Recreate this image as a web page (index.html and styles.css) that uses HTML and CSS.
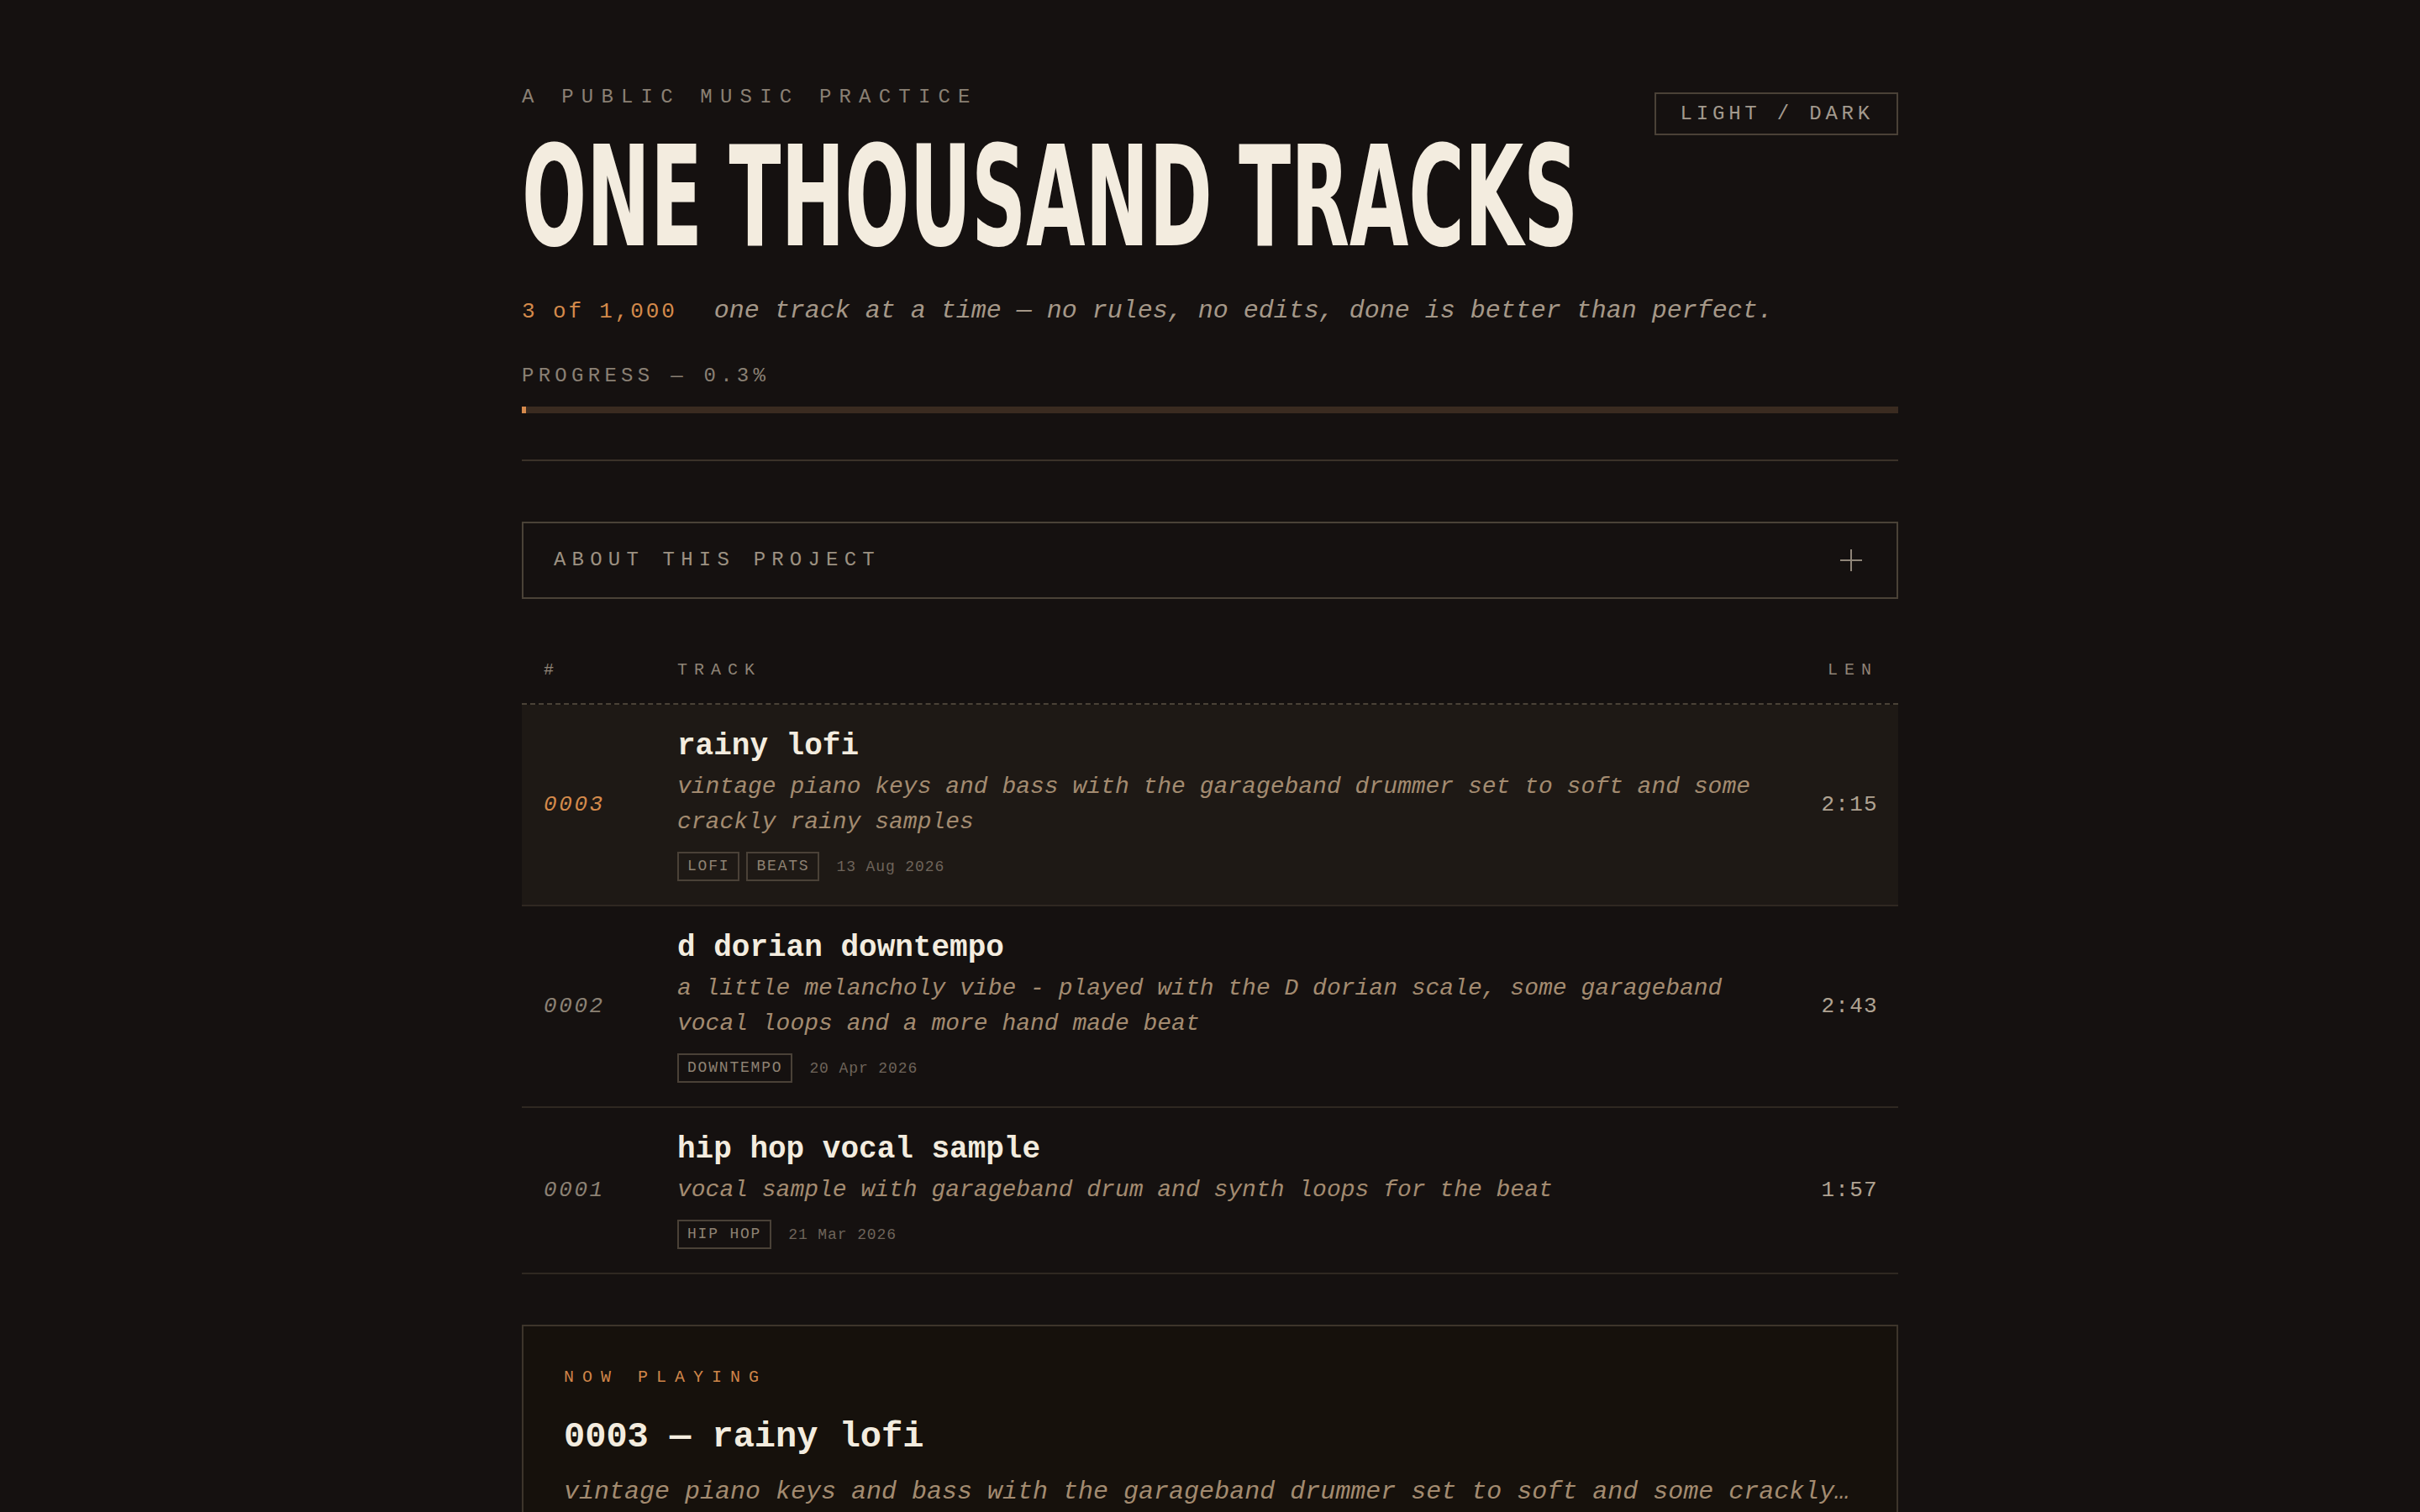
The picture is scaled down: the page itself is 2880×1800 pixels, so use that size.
FILE: index.html
```html
<!DOCTYPE html>
<html lang="en">
<head>
<meta charset="utf-8">
<title>One Thousand Tracks</title>
<link rel="stylesheet" href="styles.css">
</head>
<body>
<main class="page">
  <header class="masthead">
    <div class="masthead-main">
      <p class="eyebrow">A PUBLIC MUSIC PRACTICE</p>
      <h1 class="title"><span class="title-text">ONE THOUSAND TRACKS</span></h1>
    </div>
    <button class="theme-toggle" type="button">LIGHT / DARK</button>
  </header>

  <p class="tagline"><span class="count">3 of 1,000</span><span class="motto">one track at a time — no rules, no edits, done is better than perfect.</span></p>

  <p class="progress-label">PROGRESS — 0.3%</p>
  <div class="bar"><div class="bar-fill" style="width:0.3%"></div></div>

  <hr class="rule">

  <section class="about">
    <span class="about-label">ABOUT THIS PROJECT</span>
    <svg class="about-icon" width="28" height="28" viewBox="0 0 28 28" aria-hidden="true"><path d="M14 1V27M1 14H27" stroke="#8f8578" stroke-width="2" fill="none"/></svg>
  </section>

  <section class="tracks">
    <div class="track-head">
      <span>#</span>
      <span>TRACK</span>
      <span class="head-len">LEN</span>
    </div>

    <article class="track is-active">
      <span class="num">0003</span>
      <div class="info">
        <h2 class="name">rainy lofi</h2>
        <p class="desc">vintage piano keys and bass with the garageband drummer set to soft and some crackly rainy samples</p>
        <div class="meta"><span class="tag">LOFI</span><span class="tag">BEATS</span><span class="date">13 Aug 2026</span></div>
      </div>
      <span class="len">2:15</span>
    </article>

    <article class="track">
      <span class="num">0002</span>
      <div class="info">
        <h2 class="name">d dorian downtempo</h2>
        <p class="desc">a little melancholy vibe - played with the D dorian scale, some garageband vocal loops and a more hand made beat</p>
        <div class="meta"><span class="tag">DOWNTEMPO</span><span class="date">20 Apr 2026</span></div>
      </div>
      <span class="len">2:43</span>
    </article>

    <article class="track">
      <span class="num">0001</span>
      <div class="info">
        <h2 class="name">hip hop vocal sample</h2>
        <p class="desc">vocal sample with garageband drum and synth loops for the beat</p>
        <div class="meta"><span class="tag">HIP HOP</span><span class="date">21 Mar 2026</span></div>
      </div>
      <span class="len">1:57</span>
    </article>
  </section>

  <section class="now">
    <p class="now-label">NOW PLAYING</p>
    <h2 class="now-title">0003 — rainy lofi</h2>
    <p class="now-desc">vintage piano keys and bass with the garageband drummer set to soft and some crackly rainy samples</p>
  </section>
</main>
</body>
</html>
```
FILE: styles.css
```css
* { box-sizing: border-box; }
html, body { margin: 0; padding: 0; }
body {
  background: #151110;
  color: #a39888;
  font-family: "Liberation Mono", "DejaVu Sans Mono", monospace;
}
.page {
  max-width: 1638px;
  margin: 0 auto;
  padding: 98px 0 200px;
}
.masthead {
  display: flex;
  justify-content: space-between;
  align-items: flex-start;
}
.masthead-main { flex: 1; min-width: 0; }
.eyebrow {
  margin: 0;
  font-size: 24px;
  line-height: 36px;
  letter-spacing: 0.383em;
  color: #8a8074;
}
.title {
  margin: 19px 0 0;
  font-family: "DejaVu Sans Condensed", "DejaVu Sans", sans-serif;
  font-weight: 700;
  font-size: 165px;
  line-height: 165px;
  color: #f3ecdf;
  white-space: nowrap;
}
.title-text {
  display: inline-block;
  transform: scaleX(0.611);
  transform-origin: left center;
}
.theme-toggle {
  flex: none;
  margin-top: 12px;
  border: 2px solid #4a4137;
  background: transparent;
  color: #a39a8e;
  font-family: inherit;
  font-size: 24px;
  line-height: 35px;
  letter-spacing: 0.2em;
  padding: 6px 27px 6px 29px;
}
.tagline {
  margin: 30px 0 0;
  font-size: 30px;
  line-height: 45px;
  display: flex;
  align-items: baseline;
}
.count {
  color: #d48a4b;
  font-size: 26px;
  letter-spacing: 0.11em;
  margin-right: 44px;
}
.motto { font-style: italic; color: #a59888; }
.progress-label {
  margin: 36px 0 0;
  font-size: 24px;
  line-height: 36px;
  letter-spacing: 0.22em;
  color: #8a8074;
}
.bar {
  margin-top: 18px;
  height: 8px;
  background: #3a2b20;
}
.bar-fill { height: 100%; background: #d58a4c; }
.rule {
  margin: 55px 0 0;
  border: 0;
  border-top: 2px solid #3b3229;
}
.about {
  margin-top: 72px;
  border: 2px solid #4a4237;
  padding: 26px 40px 26px 36px;
  display: flex;
  justify-content: space-between;
  align-items: center;
}
.about-label {
  font-size: 24px;
  line-height: 36px;
  letter-spacing: 0.3em;
  color: #9c9182;
}
.about-icon { display: block; }
.tracks { margin-top: 48px; }
.track-head, .track {
  display: grid;
  grid-template-columns: 124px 1fr 80px;
  column-gap: 35px;
}
.track-head {
  padding: 22px 24px 24px 26px;
  border-bottom: 2px dashed #4a4237;
  font-size: 20px;
  line-height: 30px;
  letter-spacing: 0.4em;
  color: #8f8477;
}
.head-len { text-align: right; }
.track {
  align-items: center;
  padding: 28px 24px 28px 26px;
  border-bottom: 2px solid #2f2821;
}
.track.is-active { background: #1e1915; }
.num {
  font-size: 26px;
  font-style: italic;
  letter-spacing: 0.1em;
  color: #8b8174;
}
.is-active .num { color: #d48a4b; }
.len {
  text-align: right;
  font-size: 26px;
  letter-spacing: 0.05em;
  color: #b0a392;
}
.name {
  margin: 0;
  font-size: 36px;
  line-height: 44px;
  font-weight: 700;
  color: #f3ecdf;
}
.desc {
  margin: 5px 0 0;
  font-size: 28px;
  line-height: 42px;
  font-style: italic;
  color: #a38b70;
}
.meta {
  margin-top: 14px;
  display: flex;
  align-items: center;
  gap: 8px;
}
.tag {
  border: 2px solid #4a4137;
  padding: 6px 10px;
  font-size: 18px;
  line-height: 19px;
  letter-spacing: 0.1em;
  color: #8e8273;
}
.date {
  margin-left: 12px;
  font-size: 18px;
  letter-spacing: 0.05em;
  color: #6e645a;
}
.now {
  margin-top: 60px;
  border: 2px solid #3d352b;
  background: #16110c;
  padding: 46px 48px;
}
.now-label {
  margin: 0;
  font-size: 20px;
  line-height: 30px;
  letter-spacing: 0.5em;
  color: #cf8549;
}
.now-title {
  margin: 29px 0 0;
  font-size: 42px;
  line-height: 55px;
  font-weight: 700;
  color: #f3ecdf;
}
.now-desc {
  margin: 15px 0 0;
  font-size: 30px;
  line-height: 45px;
  font-style: italic;
  color: #a38b70;
  white-space: nowrap;
  overflow: hidden;
  text-overflow: ellipsis;
}
```
